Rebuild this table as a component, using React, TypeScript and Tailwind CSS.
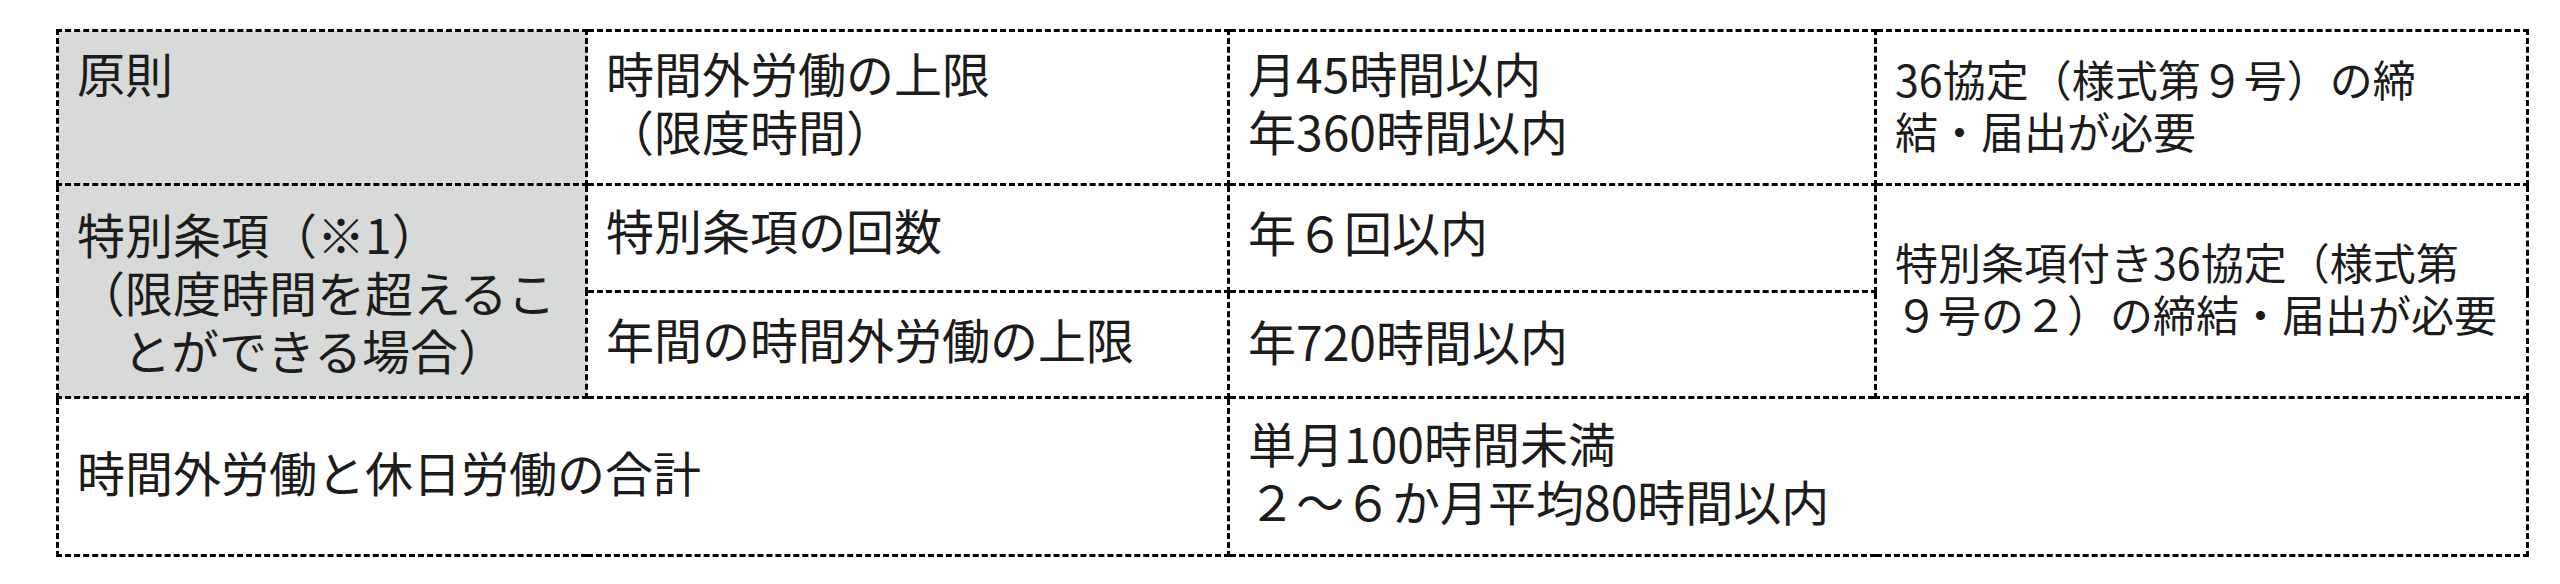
const cell =
  'border-[3px] border-dashed border-black pl-[18px] pr-2 align-middle whitespace-nowrap';
const big = 'text-[48px] leading-[58px]';
const small = 'text-[43px] leading-[52px]';
const gray = 'bg-[#d8d9d9]';

export default function App() {
  return (
    <div className="h-[584px] w-[2560px] bg-white pl-[56px] pt-[29px] font-['Noto_Sans_CJK_JP','Noto_Sans',sans-serif] text-[#1c1c1c]">
      <table className="w-[2470px] table-fixed border-collapse">
        <colgroup>
          <col className="w-[529px]" />
          <col className="w-[642px]" />
          <col className="w-[647px]" />
          <col className="w-[652px]" />
        </colgroup>
        <tbody>
          <tr className="h-[154px]">
            <td className={`${cell} ${big} ${gray} !align-top pt-[11px]`}>原則</td>
            <td className={`${cell} ${big} pb-[13px]`}>
              時間外労働の上限
              <br />
              （限度時間）
            </td>
            <td className={`${cell} ${big} pb-[13px]`}>
              月45時間以内
              <br />
              年360時間以内
            </td>
            <td className={`${cell} ${small} pb-[8px]`}>
              36協定（様式第９号）の締
              <br />
              結・届出が必要
            </td>
          </tr>
          <tr className="h-[107px]">
            <td rowSpan={2} className={`${cell} ${big} ${gray}`}>
              特別条項（※1）
              <br />
              （限度時間を超えるこ
              <br />
              <span className="pl-[46px]">とができる場合）</span>
            </td>
            <td className={`${cell} ${big} pb-[18px]`}>特別条項の回数</td>
            <td className={`${cell} ${big} pb-[14px]`}>年６回以内</td>
            <td rowSpan={2} className={`${cell} ${small} pb-[8px]`}>
              特別条項付き36協定（様式第
              <br />
              ９号の２）の締結・届出が必要
            </td>
          </tr>
          <tr className="h-[106px]">
            <td className={`${cell} ${big} pb-[14px]`}>年間の時間外労働の上限</td>
            <td className={`${cell} ${big} pb-[10px]`}>年720時間以内</td>
          </tr>
          <tr className="h-[158px]">
            <td colSpan={2} className={`${cell} ${big} pb-[12px]`}>
              時間外労働と休日労働の合計
            </td>
            <td colSpan={2} className={`${cell} ${big} pb-[12px]`}>
              単月100時間未満
              <br />
              ２～６か月平均80時間以内
            </td>
          </tr>
        </tbody>
      </table>
    </div>
  );
}
